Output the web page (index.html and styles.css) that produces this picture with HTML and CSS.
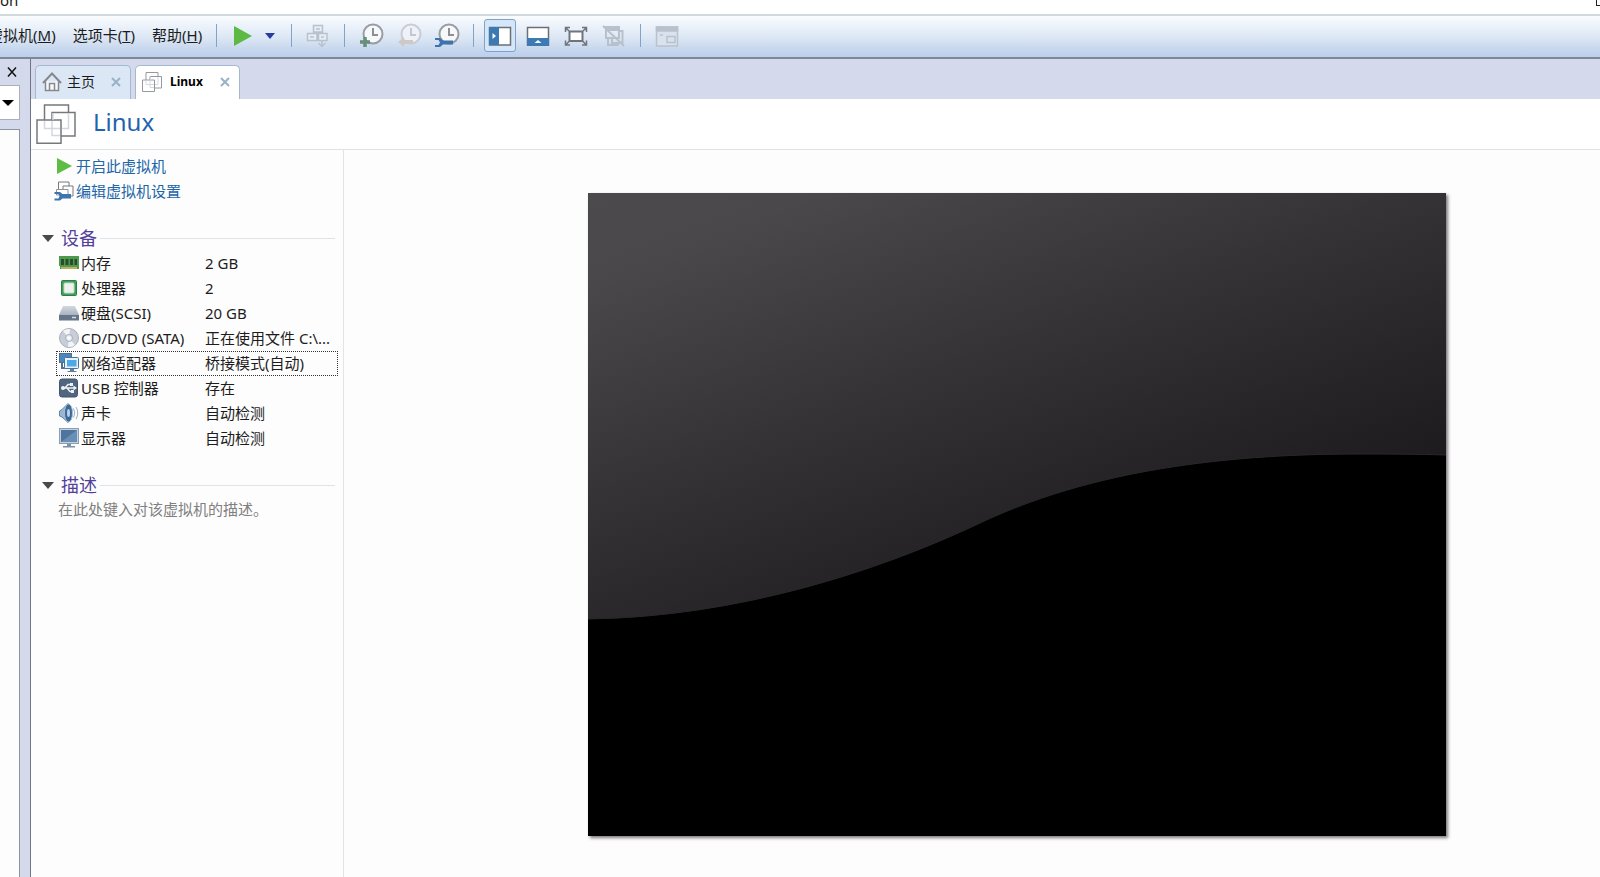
FILE: index.html
```html
<!DOCTYPE html>
<html lang="zh-CN">
<head>
<meta charset="utf-8">
<title>Linux</title>
<link rel="stylesheet" href="styles.css">
</head>
<body>
<div class="titlebar"><span>on</span><span class="maximize"></span></div>

<header class="toolbar">
  <nav class="menus">
    <button class="menu">虚拟机(<u>M</u>)</button>
    <button class="menu">选项卡(<u>T</u>)</button>
    <button class="menu">帮助(<u>H</u>)</button>
  </nav>
  <span class="sep"></span>
  <button class="tool" aria-label="开机"><svg width="24" height="24" viewBox="0 0 24 24"><path d="M3 2L21 12L3 22Z" fill="#5cb944"/></svg></button>
  <button class="caret" aria-label="电源选项"><svg width="10" height="6" viewBox="0 0 10 6"><path d="M0 0H10L5 6Z" fill="#2b3aa0"/></svg></button>
  <span class="sep"></span>
  <button class="tool" aria-label="发送按键" disabled><svg width="24" height="24" viewBox="0 0 24 24" fill="none" stroke="#b9c1cd" stroke-width="1.500"><path d="M7.500 1.500H16.500V8H7.500ZM1.500 9.500H11V16.500H1.500ZM12.500 9.500H21V16.500H12.500ZM10 5H14M4 13H8M15 13H18" fill="#e6edf6"/><path d="M16 17V22M12.500 19L16 22.500L19.500 19"/></svg></button>
  <span class="sep"></span>
  <div class="group">
    <button class="tool" aria-label="拍摄快照"><svg width="26" height="26" viewBox="0 0 26 26" fill="none"><circle cx="15" cy="11" r="9.500" fill="#f7f8fa" stroke="#999da3" stroke-width="2"/><path d="M15 5V12H20" stroke="#8c9096" stroke-width="2"/><path d="M7 14V24M2 19H12" stroke="#66907c" stroke-width="3.500"/></svg></button>
    <button class="tool" aria-label="恢复快照" disabled><svg width="26" height="26" viewBox="0 0 26 26" fill="none"><circle cx="15" cy="11" r="9.500" fill="#eef2f8" stroke="#c7ccd5" stroke-width="2"/><path d="M15 5V12H20" stroke="#c2c7d0" stroke-width="2"/><path d="M2 19L8 14V17H17V21H8V24Z" fill="#cfc9c5"/></svg></button>
    <button class="tool" aria-label="管理快照"><svg width="26" height="26" viewBox="0 0 26 26" fill="none"><circle cx="15" cy="11" r="9.500" fill="#f7f8fa" stroke="#999da3" stroke-width="2"/><path d="M15 5V12H20" stroke="#8c9096" stroke-width="2"/><path d="M1 15H6L9 17.500H19V21.500H9L6 24H1V22H4.500L6 19.500L4.500 17H1Z" fill="#3f73ae"/></svg></button>
  </div>
  <span class="sep"></span>
  <div class="group">
    <button class="tool tool-on" aria-label="显示库"><svg width="24" height="24" viewBox="0 0 24 24"><path d="M1.500 3.500H22.500V21H1.500Z" fill="#fff" stroke="#6a7077" stroke-width="1.500"/><path d="M1 3H11V21H1Z" fill="#3d79b3"/><path d="M4.500 9L8 12L4.500 15Z" fill="#fff"/></svg></button>
    <button class="tool" aria-label="显示缩略图栏"><svg width="24" height="24" viewBox="0 0 24 24"><path d="M1.500 3.500H22.500V21H1.500Z" fill="#fff" stroke="#6a7077" stroke-width="1.500"/><path d="M1 14H23V22H1Z" fill="#3d79b3"/><path d="M8.500 19L12 16L15.500 19Z" fill="#fff"/></svg></button>
    <button class="tool" aria-label="全屏"><svg width="24" height="24" viewBox="0 0 24 24" fill="none" stroke="#70757c" stroke-width="2"><path d="M5.500 7.500H18.500V17H5.500Z" fill="#fff"/><path d="M1.500 8V3.500H6M18 3.500H22.500V8M22.500 16.500V21H18M6 21H1.500V16.500M2 4L5 7M22 4L19 7M22 20.500L19 17.500M2 20.500L5 17.500" stroke-width="1.500"/></svg></button>
    <button class="tool" aria-label="Unity" disabled><svg width="24" height="24" viewBox="0 0 24 24" fill="none" stroke="#b8c0cc" stroke-width="2"><path d="M4 3H17V14H4ZM17 7H20.500V19H10V14M6 14V21H16V19"/><path d="M4 3H17V6H4Z" fill="#b8c0cc"/><path d="M1 2L22 22"/></svg></button>
  </div>
  <span class="sep"></span>
  <button class="tool" aria-label="控制台视图" disabled><svg width="24" height="24" viewBox="0 0 24 24" fill="none" stroke="#b9c1cd" stroke-width="1.500"><path d="M1.500 3H22.500V22H1.500Z" fill="#d9e2ee"/><path d="M1.500 3H22.500V7H1.500Z" fill="#b9c1cd"/><path d="M12 12.500H20V18.500H12ZM5 11H8"/></svg></button>
</header>

<div class="workspace">
  <aside class="library">
    <button class="close-lib" aria-label="关闭库"><svg width="10" height="10" viewBox="0 0 10 10"><path d="M1 0.500L9 9.500M9 0.500L1 9.500" stroke="#111" stroke-width="1.500"/></svg></button>
    <button class="search-drop" aria-label="搜索选项"><svg width="12" height="6" viewBox="0 0 12 6"><path d="M0 0H12L6 6Z"/></svg></button>
    <div class="tree"></div>
  </aside>

  <main class="content">
    <div class="tabs">
      <div class="tab">
        <svg width="20" height="20" viewBox="0 0 20 20" fill="none" stroke="#85898e" stroke-width="1.500"><path d="M3.500 9.500V18.500H16.500V9.500" fill="#f8f8f8"/><path d="M1 11L10 1.500L19 11" stroke-width="2"/><path d="M7.500 18V11.500H12.500V18"/></svg>
        <span class="tab-name">主页</span>
        <button class="tab-close" aria-label="关闭主页"><svg width="10" height="10" viewBox="0 0 10 10"><path d="M1 1L9 9M9 1L1 9" stroke="#98b2c6" stroke-width="2"/></svg></button>
      </div>
      <div class="tab tab-active">
        <svg width="20" height="20" viewBox="0 0 40 40" fill="none" stroke="#97989b" stroke-width="2"><path d="M8 1H32V25H8Z"/><path d="M16 9H39V32H16Z" fill="#fff"/><path d="M1 16H25V39H1Z" fill="#fff"/><path d="M8 17V25H24M16 31V17M16 31H24M17 9V16M32 10V25H26" stroke="#d6d9e4"/></svg>
        <span class="tab-name">Linux</span>
        <button class="tab-close" aria-label="关闭 Linux"><svg width="10" height="10" viewBox="0 0 10 10"><path d="M1 1L9 9M9 1L1 9" stroke="#98b2c6" stroke-width="2"/></svg></button>
      </div>
    </div>

    <div class="vm-head">
      <svg width="40" height="40" viewBox="0 0 40 40" fill="none" stroke="#77787b" stroke-width="1.500"><path d="M8.500 1H32.500V25H8.500Z" fill="#fff"/><path d="M16 8.500H39V32H16Z" fill="#fff"/><path d="M1 16H25V39.200H1Z" fill="#fff"/><path d="M8.500 17V24.500H24M16 17V31.500H24M32.500 9V24.500H26M17 16V9" stroke="#d3d7e4"/></svg>
      <h1>Linux</h1>
    </div>

    <div class="vm-body">
      <section class="details">
        <div class="actions">
          <a href="#"><svg width="20" height="20" viewBox="0 0 20 20"><path d="M3 2L18 10L3 18Z" fill="#5fbd45"/></svg>开启此虚拟机</a>
          <a href="#"><svg width="20" height="20" viewBox="0 0 20 20" fill="none"><path d="M4.500 1H15V10H4.500Z" fill="#fff" stroke="#75787d"/><path d="M9 5H19V15H9Z" fill="#fff" stroke="#75787d"/><path d="M2.500 8.500H14V14H2.500Z" fill="#fff" stroke="#8f9297"/><path d="M0.500 11H6L8.500 13H17V17.500H8.500L6 19.500H0.500V17.500H4.500L5.500 15L4.500 13H0.500Z" fill="#3f74af"/></svg>编辑虚拟机设置</a>
        </div>

        <h2><svg width="12" height="7" viewBox="0 0 12 7"><path d="M0 0H12L6 7Z" fill="#4a4a4a"/></svg>设备</h2>
        <table class="devices">
          <tr><th scope="row"><svg width="20" height="20" viewBox="0 0 20 20"><path d="M0 3H20V16H18V14H10V16H1V13H0Z" fill="#4c9b4d"/><path d="M2 14H18V16H2Z" fill="#c2b05b"/><path d="M2 6H5V12H2ZM6.500 6H9.500V12H6.500ZM11 6H14V12H11ZM15.500 6H18V12H15.500Z" fill="#2d4a30"/></svg>内存</th><td>2 GB</td></tr>
          <tr><th scope="row"><svg width="20" height="20" viewBox="0 0 20 20"><rect x="2.500" y="2.500" width="15" height="15" rx="1" fill="#3fa05c" stroke="#2e7c48"/><rect x="5" y="5" width="10" height="10" rx="1" fill="#eef2ee" stroke="#c3dcc8"/></svg>处理器</th><td>2</td></tr>
          <tr><th scope="row"><svg width="20" height="20" viewBox="0 0 20 20"><defs><linearGradient id="hd" x2="0" y2="1"><stop stop-color="#d3d9e0"/><stop offset="1" stop-color="#939dab"/></linearGradient></defs><path d="M4 3H16L20 12V17H0V12Z" fill="url(#hd)"/><path d="M0 12H20V17.500H0Z" fill="#67758a"/><path d="M13 14.500H17" stroke="#c6e0ec" stroke-width="1.500"/></svg>硬盘(SCSI)</th><td>20 GB</td></tr>
          <tr><th scope="row"><svg width="20" height="20" viewBox="0 0 20 20"><circle cx="10" cy="10" r="9.500" fill="#c8ced7" stroke="#a8afb9"/><path d="M10 10L4 3A9 9 0 0 1 11 1ZM10 10L16 17A9 9 0 0 1 9 19Z" fill="#f2f5f8"/><circle cx="10" cy="10" r="3.500" fill="#e8ecf0" stroke="#a5adb8"/><circle cx="10" cy="10" r="1.500" fill="#fff"/></svg>CD/DVD (SATA)</th><td>正在使用文件 C:\...</td></tr>
          <tr class="focused"><th scope="row"><svg width="20" height="20" viewBox="0 0 20 20"><rect x="0.500" y="0.500" width="12" height="9" fill="#4a87bf" stroke="#53718f"/><path d="M3 10V15H7" fill="none" stroke="#4f7190" stroke-width="2"/><rect x="5.500" y="4.500" width="14" height="11" rx="1" fill="#e8f1f8" stroke="#4c7395"/><path d="M8 7H17.500V13.500H8Z" fill="#4ba9e8"/><path d="M11 16H15V18H17.500V19H8.500V18H11Z" fill="#657e96"/></svg>网络适配器</th><td>桥接模式(自动)</td></tr>
          <tr><th scope="row"><svg width="20" height="20" viewBox="0 0 20 20" fill="none"><rect x="0.500" y="1" width="18" height="18" rx="2.500" fill="#52657f" stroke="#43566f"/><path d="M3 10H16M6 10L9 6.500H12M8 10L11 13.500H13" stroke="#eef2f6" stroke-width="1.500"/><circle cx="4" cy="10" r="2" fill="#eef2f6"/><path d="M14.500 7.500L18 10L14.500 12.500ZM11 5H14V8H11ZM12 12H15V15H12Z" fill="#eef2f6"/></svg>USB 控制器</th><td>存在</td></tr>
          <tr><th scope="row"><svg width="20" height="20" viewBox="0 0 20 20" fill="none"><path d="M0.500 8L3 6.500L9 0.500V19.500L3 14L0.500 13Z" fill="#9ab6d2" stroke="#6184a9"/><ellipse cx="9.500" cy="10" rx="4" ry="9" fill="#3c6898" stroke="#a6bed5"/><ellipse cx="9.500" cy="10" rx="1.500" ry="4" fill="#b9d1e6"/><path d="M14.500 5.500Q17 10 14.500 14.500M17 4Q20.500 10 17 16" stroke="#9eb2c8"/></svg>声卡</th><td>自动检测</td></tr>
          <tr><th scope="row"><svg width="20" height="20" viewBox="0 0 20 20"><rect x="0.500" y="0.500" width="19" height="15" fill="#c3d0de" stroke="#8b9eb3"/><path d="M2 2H18V14H2Z" fill="#4f759f"/><path d="M2 14L18 2V14Z" fill="#6a8fb6"/><path d="M8 16H12V18H16V19.500H4V18H8Z" fill="#7c91a8"/></svg>显示器</th><td>自动检测</td></tr>
        </table>

        <h2><svg width="12" height="7" viewBox="0 0 12 7"><path d="M0 0H12L6 7Z" fill="#4a4a4a"/></svg>描述</h2>
        <p class="desc">在此处键入对该虚拟机的描述。</p>
      </section>

      <section class="preview">
        <svg class="screen" viewBox="0 0 858 643" preserveAspectRatio="none">
          <defs><linearGradient id="glass" gradientUnits="userSpaceOnUse" x1="0" y1="0" x2="188" y2="509"><stop offset="0" stop-color="#4c4a4c"/><stop offset="0.150" stop-color="#4a484a"/><stop offset="0.550" stop-color="#343234"/><stop offset="0.800" stop-color="#272528"/><stop offset="1" stop-color="#1d1b1e"/></linearGradient></defs>
          <path d="M0 0H858V643H0Z" fill="#000"/>
          <path d="M0 0H858V262C830 261 800 261 770 261C600 261 480 288 390 331C290 378 150 424 0 426Z" fill="url(#glass)"/>
          <path d="M858 262C830 261 800 261 770 261C600 261 480 288 390 331C290 378 150 424 0 426" fill="none" stroke="#29272b" stroke-width="1"/>
        </svg>
      </section>
    </div>
  </main>
</div>
</body>
</html>
```
FILE: styles.css
```css
* { box-sizing: border-box; }

body {
  margin: 0;
  min-height: 100vh;
  display: flex;
  flex-direction: column;
  overflow: hidden;
  background: #fdfdfd;
  color: #1c1c1c;
  font: 15px/20px "Noto Sans", "Noto Sans CJK SC", sans-serif;
}

button {
  border: 0;
  padding: 0;
  background: none;
  color: inherit;
  font: inherit;
}

svg { display: block; flex: none; }

.titlebar {
  display: flex;
  justify-content: space-between;
  align-items: flex-end;
  height: 14px;
  line-height: 28px;
  background: #fff;
  overflow: hidden;
}
.maximize {
  align-self: flex-start;
  width: 4px;
  height: 6px;
  border-left: 1px solid #222;
  border-bottom: 1px solid #222;
}

.toolbar {
  display: flex;
  align-items: center;
  height: 45px;
  padding-bottom: 2px;
  border-top: 2px solid #d0dadd;
  border-bottom: 2px solid #7d8798;
  background: linear-gradient(#f9fcff, #dbe6f4 55%, #cbdaee 75%, #bbcfec);
}
.menus { display: flex; gap: 17px; margin-left: -12px; padding-bottom: 2px; }
.menu { white-space: nowrap; }
.sep { width: 1px; height: 23px; margin: 0 10px; background: #83a3c6; }
.menus + .sep { margin-left: 14px; }
.group { display: flex; gap: 6px; }
.tool, .caret {
  display: flex;
  align-items: center;
  justify-content: center;
  width: 32px;
  height: 33px;
}
.caret { width: 22px; }
.tool-on {
  border: 1px solid #7fa3c8;
  border-radius: 3px;
  background: #d5e6f8;
}

.workspace { display: flex; flex: 1; background: #d4d9ec; }

.library {
  display: flex;
  flex-direction: column;
  width: 30px;
  padding-right: 10px;
}
.close-lib { align-self: flex-end; width: 16px; padding: 8px 3px; }
.search-drop {
  display: flex;
  align-items: center;
  justify-content: center;
  height: 35px;
  padding-right: 4px;
  border: 1px solid #a9afbc;
  border-left: 0;
  background: #fff;
}
.tree {
  flex: 1;
  margin-top: 9px;
  border: 1px solid #8d93a3;
  border-width: 1px 1px 0 0;
  background: #fdfdfd;
}

.content {
  display: flex;
  flex: 1;
  flex-direction: column;
  border-left: 1px solid #6f7584;
}

.tabs { display: flex; align-items: flex-end; gap: 4px; height: 40px; padding-left: 4px; }
.tab {
  display: flex;
  align-items: center;
  height: 34px;
  padding: 0 9px 2px 6px;
  border: 1px solid #a4b9d1;
  border-bottom: 0;
  border-radius: 5px 5px 0 0;
  background: #dce7f6;
  font-size: 14px;
}
.tab-name { margin: 0 16px 0 5px; }
.tab-active { background: #fff; font-size: 12px; font-weight: bold; color: #000; }
.tab-active .tab-name { margin-left: 8px; margin-right: 17px; }

.vm-head {
  display: flex;
  align-items: center;
  gap: 17px;
  height: 51px;
  padding-left: 5px;
  border-bottom: 1px solid #dfe3e6;
  background: #fff;
}
.vm-head h1 { margin: 0; padding-bottom: 4px; color: #1f63b0; font-size: 24px; line-height: 32px; font-weight: normal; }

.vm-body { display: flex; flex: 1; background: #fdfdfd; }
.details {
  width: 313px;
  padding: 4px 5px 0 11px;
  border-right: 1px solid #e1e5e9;
}

.actions { display: flex; flex-direction: column; align-items: flex-start; padding: 0 12px; }
.actions a {
  display: flex;
  align-items: center;
  gap: 2px;
  height: 25px;
  padding-bottom: 1px;
  color: #2166a8;
  text-decoration: none;
}

.details h2 {
  display: flex;
  align-items: center;
  margin: 21px 3px 0 0;
  color: #523f99;
  font-size: 18px;
  line-height: 26px;
  font-weight: normal;
}
.details h2 svg { margin-right: 7px; }
.details h2::after { content: ""; flex: 1; height: 1px; margin-left: 3px; background: #dfe3e7; }

.devices {
  width: 282px;
  margin: 0 0 0 14px;
  border-collapse: collapse;
  table-layout: fixed;
}
.devices tr { height: 25px; }
.devices th {
  display: flex;
  align-items: center;
  gap: 2px;
  height: 25px;
  padding: 0 0 2px 3px;
  font-weight: normal;
  white-space: nowrap;
}
.devices td { width: 133px; padding: 0 0 2px; white-space: nowrap; }
.focused { outline: 1px dotted #333; outline-offset: -1px; }

.desc { margin: 0 0 0 16px; color: #808080; line-height: 22px; }

.preview { flex: 1; padding: 43px 154px 0 244px; }
.screen {
  width: 100%;
  aspect-ratio: 858 / 643;
  box-shadow: 2px 2px 3px rgba(40, 30, 40, 0.6);
}
```
